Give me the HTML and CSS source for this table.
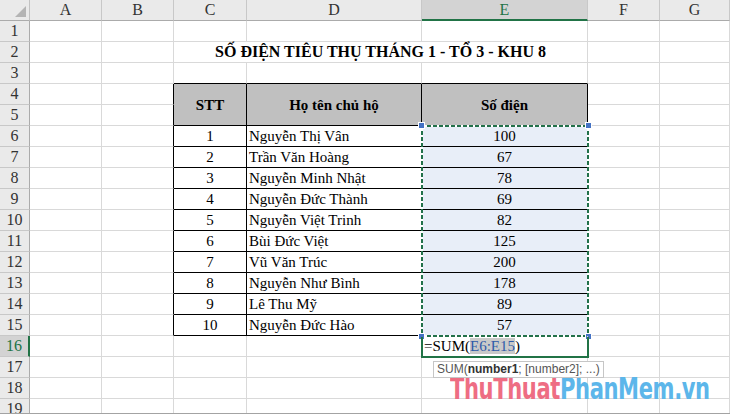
FILE: index.html
```html
<!DOCTYPE html>
<html lang="vi">
<head>
<meta charset="utf-8">
<title>Sheet</title>
<link rel="stylesheet" href="styles.css">
</head>
<body>
<div class="sheet">
  <div class="grid">
    <div class="corner"><span class="tri"></span></div>
    <div class="ch">A</div><div class="ch">B</div><div class="ch">C</div><div class="ch">D</div><div class="ch sel">E</div><div class="ch">F</div><div class="ch">G</div>

    <div class="rh">1</div><div class="c"></div><div class="c"></div><div class="c"></div><div class="c"></div><div class="c"></div><div class="c"></div><div class="c"></div>

    <div class="rh">2</div><div class="c"></div><div class="c"></div><div class="c title">SỐ ĐIỆN TIÊU THỤ THÁNG 1 - TỔ 3 - KHU 8</div><div class="c"></div><div class="c"></div>

    <div class="rh">3</div><div class="c"></div><div class="c"></div><div class="c bb"></div><div class="c bb"></div><div class="c bb"></div><div class="c"></div><div class="c"></div>

    <div class="rh">4</div><div class="c"></div><div class="c bl"></div><div class="th">STT</div><div class="th">Họ tên chủ hộ</div><div class="th">Số điện</div><div class="c"></div><div class="c"></div>
    <div class="rh">5</div><div class="c"></div><div class="c bl"></div><div class="c"></div><div class="c"></div>

    <div class="rh">6</div><div class="c"></div><div class="c bl"></div><div class="t ctr">1</div><div class="t name">Nguyễn Thị Vân</div><div class="t ctr sel first">100
      <span class="ants"><i class="h tl"></i><i class="h tr"></i><i class="h bl2"></i><i class="h br"></i></span></div><div class="c"></div><div class="c"></div>
    <div class="rh">7</div><div class="c"></div><div class="c bl"></div><div class="t ctr">2</div><div class="t name">Trần Văn Hoàng</div><div class="t ctr sel">67</div><div class="c"></div><div class="c"></div>
    <div class="rh">8</div><div class="c"></div><div class="c bl"></div><div class="t ctr">3</div><div class="t name">Nguyễn Minh Nhật</div><div class="t ctr sel">78</div><div class="c"></div><div class="c"></div>
    <div class="rh">9</div><div class="c"></div><div class="c bl"></div><div class="t ctr">4</div><div class="t name">Nguyễn Đức Thành</div><div class="t ctr sel">69</div><div class="c"></div><div class="c"></div>
    <div class="rh">10</div><div class="c"></div><div class="c bl"></div><div class="t ctr">5</div><div class="t name">Nguyễn Việt Trinh</div><div class="t ctr sel">82</div><div class="c"></div><div class="c"></div>
    <div class="rh">11</div><div class="c"></div><div class="c bl"></div><div class="t ctr">6</div><div class="t name">Bùi Đức Việt</div><div class="t ctr sel">125</div><div class="c"></div><div class="c"></div>
    <div class="rh">12</div><div class="c"></div><div class="c bl"></div><div class="t ctr">7</div><div class="t name">Vũ Văn Trúc</div><div class="t ctr sel">200</div><div class="c"></div><div class="c"></div>
    <div class="rh">13</div><div class="c"></div><div class="c bl"></div><div class="t ctr">8</div><div class="t name">Nguyễn Như Bình</div><div class="t ctr sel">178</div><div class="c"></div><div class="c"></div>
    <div class="rh">14</div><div class="c"></div><div class="c bl"></div><div class="t ctr">9</div><div class="t name">Lê Thu Mỹ</div><div class="t ctr sel">89</div><div class="c"></div><div class="c"></div>
    <div class="rh">15</div><div class="c"></div><div class="c bl"></div><div class="t ctr">10</div><div class="t name">Nguyễn Đức Hào</div><div class="t ctr sel">57</div><div class="c"></div><div class="c"></div>

    <div class="rh rsel">16</div><div class="c"></div><div class="c"></div><div class="c"></div><div class="c"></div><div class="c act"><span class="formula">=SUM(<span class="ref">E6:E15</span>)</span><span class="actbox"></span><span class="tip">SUM(<b>number1</b>; [number2]; ...)</span></div><div class="c"></div><div class="c"></div>

    <div class="rh">17</div><div class="c"></div><div class="c"></div><div class="c"></div><div class="c"></div><div class="c"></div><div class="c"></div><div class="c"></div>
    <div class="rh">18</div><div class="c"></div><div class="c"></div><div class="c"></div><div class="c"></div><div class="c"></div><div class="c"></div><div class="c"></div>
    <div class="rh">19</div><div class="c"></div><div class="c"></div><div class="c"></div><div class="c"></div><div class="c"></div><div class="c"></div><div class="c"></div>
  </div>
  <div class="wm"><span class="wp">ThuThuat</span><span class="wb">PhanMem.vn</span></div>
</div>
</body>
</html>
```

FILE: styles.css
```css
* { box-sizing: border-box; }
html, body { margin: 0; padding: 0; background: #fff; }
body { width: 730px; height: 415px; overflow: hidden; }

.sheet {
  position: relative;
  width: 730px;
  height: 414px;
  overflow: hidden;
  border-bottom: 1px solid #a3a3a3;
  font-family: "Liberation Serif", "Times New Roman", serif;
  font-size: 15px;
  color: #000;
}

.grid {
  display: grid;
  grid-template-columns: 30px 72px 72px 73px 175px 166px 72px 70px;
  grid-auto-rows: 21px;
}

.grid > div {
  display: flex;
  align-items: center;
  line-height: 20px;
  white-space: nowrap;
}

.corner {
  position: relative;
  background: #eaeaea;
  border-right: 1px solid #c2c2c2;
  border-bottom: 1px solid #ababab;
}
.tri {
  position: absolute;
  right: 3px;
  bottom: 3px;
  width: 0;
  height: 0;
  border-left: 11px solid transparent;
  border-bottom: 11px solid #b4b4b4;
}

.ch {
  justify-content: center;
  background: #eaeaea;
  color: #333;
  font-size: 16px;
  border-right: 1px solid #c8c8c8;
  border-bottom: 1px solid #ababab;
}
.ch.sel {
  background: #d3d3d3;
  color: #217346;
  border-bottom: 2px solid #217346;
}

.rh {
  justify-content: center;
  background: #eaeaea;
  color: #333;
  font-size: 16px;
  border-right: 1px solid #ababab;
  border-bottom: 1px solid #c8c8c8;
}
.rh.rsel {
  background: #d3d3d3;
  color: #217346;
  border-right: 2px solid #217346;
}

.c {
  border-right: 1px solid #d9d9d9;
  border-bottom: 1px solid #d9d9d9;
}
.c.bl { border-right-color: #000; }
.c.bb { border-bottom-color: #000; }

.title {
  grid-column: span 3;
  justify-content: center;
  font-weight: bold;
  font-size: 16px;
}

.th {
  grid-row: span 2;
  justify-content: center;
  background: #c0c0c0;
  font-weight: bold;
  border-right: 1px solid #000;
  border-bottom: 1px solid #000;
}

.t {
  border-right: 1px solid #000;
  border-bottom: 1px solid #000;
}
.ctr { justify-content: center; }
.name { padding-left: 2px; }
.sel { background: #e8eef8; }

.first { position: relative; }
.ants {
  position: absolute;
  left: -1px;
  top: -1px;
  width: 168px;
  height: 212px;
  pointer-events: none;
  background:
    repeating-linear-gradient(to right, #22714a 0 4px, #ffffff 4px 6px) left top / 100% 2px no-repeat,
    repeating-linear-gradient(to right, #22714a 0 4px, #ffffff 4px 6px) left bottom / 100% 2px no-repeat,
    repeating-linear-gradient(to bottom, #22714a 0 4px, #ffffff 4px 6px) left top / 2px 100% no-repeat,
    repeating-linear-gradient(to bottom, #22714a 0 4px, #ffffff 4px 6px) right top / 2px 100% no-repeat;
}
.h {
  position: absolute;
  width: 7px;
  height: 7px;
  background: #4472c4;
  border: 1px solid #ffffff;
}
.h.tl { left: -3px; top: -3px; }
.h.tr { right: -3px; top: -3px; }
.h.bl2 { left: -3px; bottom: -3px; }
.h.br { right: -3px; bottom: -3px; }

.act {
  position: relative;
  padding-left: 2px;
}
.formula { position: relative; z-index: 1; }
.ref {
  color: #2e5aa8;
  background: #c9c9c9;
}
.actbox {
  position: absolute;
  left: -1px;
  top: 1px;
  width: 168px;
  height: 21px;
  border-left: 2px solid #217346;
  border-right: 2px solid #217346;
  border-bottom: 2px solid #217346;
}
.tip {
  position: absolute;
  left: 11px;
  top: 25px;
  height: 17px;
  padding: 0 3px;
  background: #fff;
  border: 1px solid #c6c6c6;
  font-family: "Liberation Sans", Arial, sans-serif;
  font-size: 12px;
  line-height: 15px;
  color: #555;
  white-space: nowrap;
  z-index: 2;
}
.tip b { color: #333; }

.wm {
  position: absolute;
  left: 450px;
  top: 377px;
  font-family: "DejaVu Sans Condensed", "DejaVu Sans", sans-serif;
  font-weight: bold;
  font-size: 31px;
  line-height: 22px;
  white-space: nowrap;
  transform: scaleX(0.755);
  transform-origin: left top;
  letter-spacing: -0.5px;
}
.wp { color: #ee6d83; }
.wb { color: #5cb6ea; }
```
